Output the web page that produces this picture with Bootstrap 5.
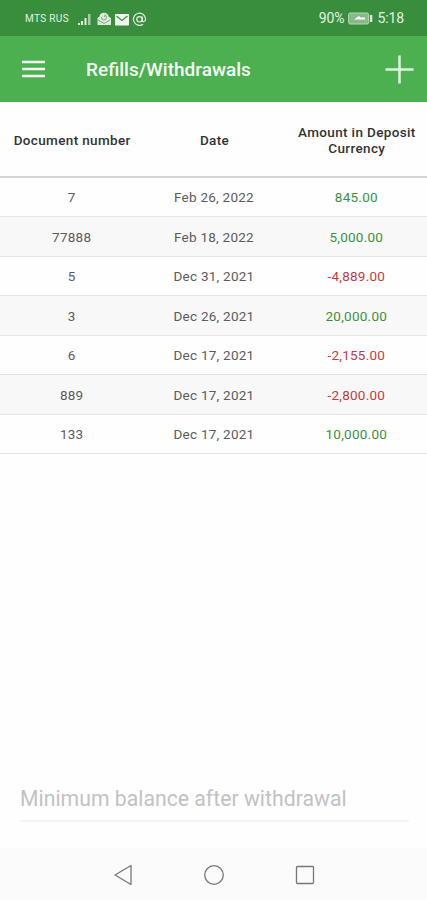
<!DOCTYPE html>
<html lang="en">
<head>
<meta charset="utf-8">
<meta name="viewport" content="width=device-width, initial-scale=1">
<title>Refills/Withdrawals</title>
<link href="https://cdn.jsdelivr.net/npm/bootstrap@5.3.0/dist/css/bootstrap.min.css" rel="stylesheet">
<style>
body{font-family:Roboto,sans-serif;height:900px;overflow:hidden;background:#fefefe}
svg{display:block;flex:none}
.status-bar{height:36px;background:#388e3c;color:#e4f2e4;padding:1px 23px 0 25px}
.carrier{font-size:10px;font-weight:400;letter-spacing:.35px;width:45px;white-space:nowrap}
.status-text{font-size:14px;letter-spacing:-.1px}
.app-bar{height:66px;background:#4caf50;padding:0 13px 0 22px}
.app-title{font-size:19px;font-weight:500;color:#f6fff6;margin-left:41px;letter-spacing:0;padding-top:2px}
.ledger{table-layout:fixed;font-size:13.5px;letter-spacing:.25px;line-height:16.500px;--bs-table-bg:transparent}
.ledger th{height:75px;padding:2px 3px 0 5px;vertical-align:middle;font-weight:500;color:#333;border-bottom:2px solid #d3d3d3;letter-spacing:.35px}
.ledger td{height:39.5px;padding:1px 0 0 1px;color:#5c5c5c;border-bottom:1.5px solid #e5e5e5}
.ledger tbody tr:nth-child(even){background:#f8f8f8}
.ledger td.credit{color:#3b913e}
.ledger td.debit{color:#c33b43}
.balance-field{height:42px;margin:0 18px 26px 20px;border:0;border-bottom:2px solid #f3f3f3;border-radius:0;background:transparent;padding:0 0 4px;font-size:21.2px;letter-spacing:.02px;width:auto}
.balance-field::placeholder{color:#c2c2c2;opacity:1}
.nav-keys{height:52px;background:#fbfbfb;gap:71px;padding-top:1px}
</style>
<script src="https://cdn.jsdelivr.net/npm/bootstrap@5.3.0/dist/js/bootstrap.bundle.min.js"></script>
</head>
<body class="d-flex flex-column m-0">
<div class="status-bar d-flex align-items-center">
  <span class="carrier">MTS RUS</span>
  <svg width="78" height="18" viewBox="70 9 78 18" fill="none">
    <path d="M78 24v-2h2v2zM81 24v-4h2v4zM84.500 24v-7h2v7z" fill="#e4f2e4"/><path d="M88 24V13h2.500v11z" fill="#a5cca6"/>
    <path d="M97.500 24v-7l2-1.500c0-5 9-5 9 0l2.500 1.500v7z" fill="#dcecdc"/><path d="M101.500 16a2.500 2.500 0 1 0 3-2M104 16l2-2.500M98 19l6 3.500 6-3.500" stroke="#72ab74" stroke-width="1"/>
    <rect x="115" y="13" width="14" height="11.500" rx=".7" fill="#f0f8f0"/><path d="M116.500 15l5.500 4.500 5.500-4.500" stroke="#388e3c" stroke-width="1.100"/>
    <circle cx="139.500" cy="18.300" r="2.700" stroke="#e4f2e4" stroke-width="1.200"/><path d="M142.200 15.500v3.300c0 2.600 3.400 2.200 3.400-.6a6.100 6.100 0 1 0-2.600 5" stroke="#e4f2e4" stroke-width="1.200"/>
  </svg>
  <span class="status-text ms-auto">90%</span>
  <svg class="mx-1" width="25" height="13" viewBox="0 0 25 13"><rect x=".6" y="1" width="20" height="11" rx="1.500" fill="#84bb87" stroke="#b5d6b6"/><path d="M6.500 7l4.500-3 1.500 1.500h4.500v2H6.500z" fill="#fff"/><path d="M21 3h3.300v7H21z" fill="#d5e9d5"/><path d="M21.500 2v9" stroke="#4f9c53"/></svg>
  <span class="status-text">5:18</span>
</div>
<header class="app-bar d-flex align-items-center">
  <svg width="23" height="18" viewBox="0 0 23 18" role="img" aria-label="Menu"><path d="M0 2h23M0 9h23M0 16h23" stroke="#f3fff1" stroke-width="2.500"/></svg>
  <h1 class="app-title mb-0">Refills/Withdrawals</h1>
  <svg class="ms-auto" width="29" height="29" viewBox="0 0 29 29" role="img" aria-label="Add"><path d="M14.500.5v28M.5 14.500h28" stroke="#e2f8dd" stroke-width="2.500"/></svg>
</header>
<main class="flex-grow-1 d-flex flex-column">
  <table class="table ledger text-center align-middle mb-0">
    <thead><tr><th>Document number</th><th>Date</th><th>Amount in Deposit Currency</th></tr></thead>
    <tbody>
      <tr><td>7</td><td>Feb 26, 2022</td><td class="credit">845.00</td></tr>
      <tr><td>77888</td><td>Feb 18, 2022</td><td class="credit">5,000.00</td></tr>
      <tr><td>5</td><td>Dec 31, 2021</td><td class="debit">-4,889.00</td></tr>
      <tr><td>3</td><td>Dec 26, 2021</td><td class="credit">20,000.00</td></tr>
      <tr><td>6</td><td>Dec 17, 2021</td><td class="debit">-2,155.00</td></tr>
      <tr><td>889</td><td>Dec 17, 2021</td><td class="debit">-2,800.00</td></tr>
      <tr><td>133</td><td>Dec 17, 2021</td><td class="credit">10,000.00</td></tr>
    </tbody>
  </table>
  <input class="form-control balance-field mt-auto" type="text" placeholder="Minimum balance after withdrawal" aria-label="Minimum balance after withdrawal">
</main>
<nav class="nav-keys d-flex justify-content-center align-items-center" aria-label="System navigation">
  <svg width="20" height="22" viewBox="0 0 20 22" fill="none" stroke="#777" stroke-width="1.300" stroke-linejoin="round"><path d="M18 1.500v19L2 11z"/></svg>
  <svg width="20" height="20" viewBox="0 0 20 20" fill="none" stroke="#777" stroke-width="1.300"><circle cx="10" cy="10" r="9.300"/></svg>
  <svg width="20" height="20" viewBox="0 0 20 20" fill="none" stroke="#777" stroke-width="1.300"><rect x="1.500" y="1.500" width="17" height="17" rx="1"/></svg>
</nav>
</body>
</html>
